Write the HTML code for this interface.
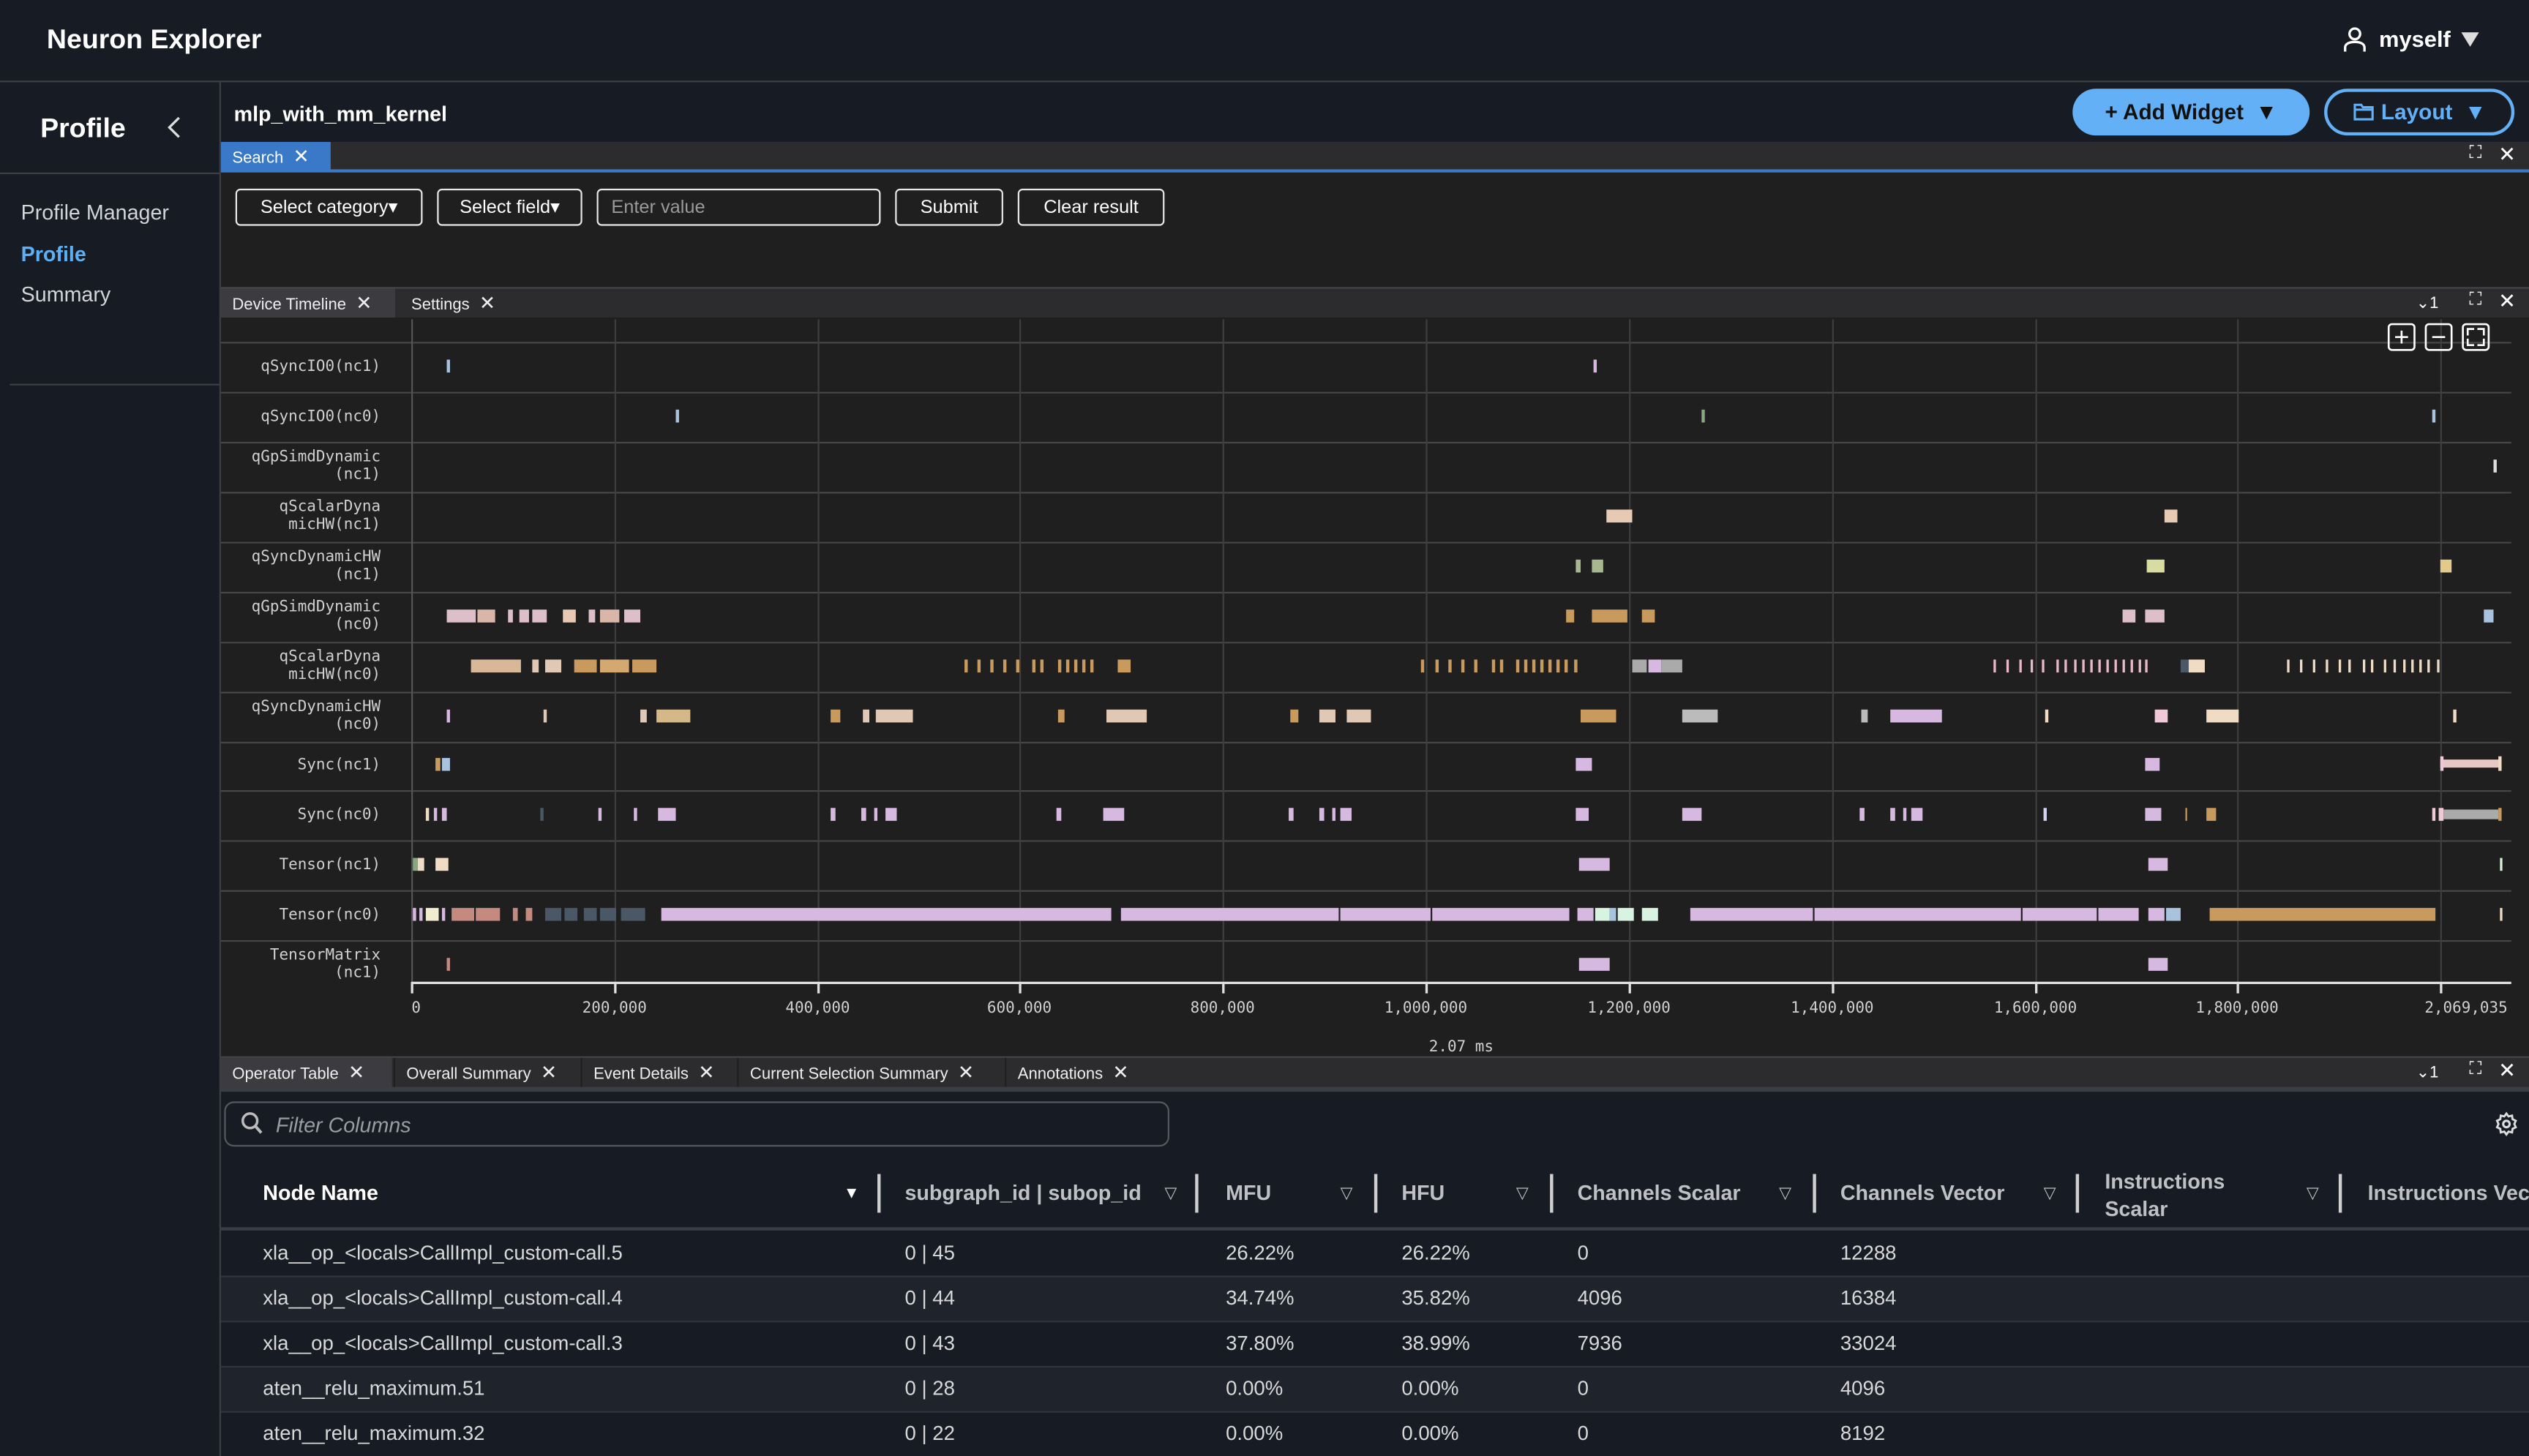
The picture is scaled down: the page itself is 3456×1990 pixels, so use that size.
<!DOCTYPE html>
<html><head><meta charset="utf-8">
<style>
html,body{margin:0;padding:0;background:#171c24;overflow:hidden;}
#w{position:absolute;left:0;top:0;width:1568px;height:903px;transform:scale(2.20408);transform-origin:0 0;font-family:"Liberation Sans",sans-serif;color:#e6e6e6;background:#171c24;overflow:hidden;}
.a{position:absolute;}
.tabbar{position:absolute;background:#2c2c2e;}
.tab{position:absolute;top:0;height:100%;font-size:10px;line-height:18px;padding-left:7px;color:#eee;box-sizing:border-box;}
.x{display:inline-block;margin-left:6px;font-size:12px;}
.btn{position:absolute;border:1px solid #e8e8e8;border-radius:3px;font-size:11.5px;color:#fff;line-height:23px;text-align:center;box-sizing:border-box;height:23px;background:#1f1f1f;}
.lbl{position:absolute;right:1332px;font-family:"DejaVu Sans Mono","Liberation Mono",monospace;font-size:9.5px;color:#d0d0d0;text-align:right;line-height:11px;white-space:nowrap;}
.hd{position:absolute;top:732px;font-size:13px;font-weight:bold;color:#bfc0c4;}
.cell{position:absolute;font-size:12.5px;color:#d8d8d8;margin-top:1px;}
.sep{position:absolute;top:728px;width:2px;height:24px;background:#cfcfcf;}
.tri{position:absolute;top:735px;font-size:10px;color:#bbb;}
</style></head><body><div id="w">
<div class="a" style="left:29px;top:15px;font-size:17px;font-weight:bold;color:#fff">Neuron Explorer</div>
<svg class="a" style="left:1452px;top:16px" width="16" height="17" viewBox="0 0 16 17"><circle cx="8" cy="5" r="3.3" fill="none" stroke="#fff" stroke-width="1.5"/><path d="M2 16v-2.5c0-2 2-3.5 6-3.5s6 1.5 6 3.5V16" fill="none" stroke="#fff" stroke-width="1.5"/></svg>
<div class="a" style="left:1475px;top:16px;font-size:14px;font-weight:bold;color:#fff">myself</div>
<svg class="a" style="left:1526px;top:20px" width="11" height="10"><path d="M0 0h11L5.5 9z" fill="#ddd"/></svg>
<div class="a" style="left:0;top:50px;width:1568px;height:1px;background:#3c3f44"></div>
<div class="a" style="left:136px;top:51px;width:1px;height:852px;background:#3c3f44"></div>
<div class="a" style="left:25px;top:70px;font-size:17px;font-weight:bold;color:#fff">Profile</div>
<svg class="a" style="left:103px;top:72px" width="10" height="14"><path d="M8 1L2 7l6 6" fill="none" stroke="#ddd" stroke-width="1.5"/></svg>
<div class="a" style="left:0;top:107px;width:136px;height:1px;background:#3c3f44"></div>
<div class="a" style="left:13px;top:124px;font-size:13px;color:#d4d4d8">Profile Manager</div>
<div class="a" style="left:13px;top:150px;font-size:13px;font-weight:bold;color:#5eb0f5">Profile</div>
<div class="a" style="left:13px;top:175px;font-size:13px;color:#d4d4d8">Summary</div>
<div class="a" style="left:6px;top:238px;width:130px;height:1px;background:#3c3f44"></div>
<div class="a" style="left:145px;top:63px;font-size:13px;font-weight:bold;color:#fff">mlp_with_mm_kernel</div>
<div class="a" style="left:1285px;top:55px;width:147px;height:29px;border-radius:15px;background:#63b0f6;color:#111;font-size:13.5px;font-weight:bold;line-height:29px;text-align:center">+ Add Widget &nbsp;▼</div>
<div class="a" style="left:1441px;top:55px;width:118px;height:29px;border-radius:15px;border:2px solid #63b0f6;box-sizing:border-box;color:#63b0f6;font-size:13.5px;font-weight:bold;line-height:25px;text-align:center"><svg width="14" height="12" style="vertical-align:-1px"><path d="M1 2h4l1 1.5h6v7.5H1z M1 5h11" fill="none" stroke="#63b0f6" stroke-width="1.4"/></svg> Layout &nbsp;▼</div>
<div class="tabbar" style="left:137px;top:88px;width:1431px;height:18px"></div>
<div class="tab" style="left:137px;top:88px;height:18px;width:68px;background:#3a78c8;color:#fff">Search<span class="x">✕</span></div>
<div class="a" style="left:137px;top:105px;width:1431px;height:2px;background:#3a78c8"></div>
<div class="a" style="left:1531px;top:89px;font-size:11px;color:#fff">⛶</div><div class="a" style="left:1549px;top:88px;font-size:13px;color:#fff">✕</div>
<div class="a" style="left:137px;top:107px;width:1431px;height:71px;background:#1f1f1f"></div>
<div class="btn" style="left:146px;top:117px;width:116px">Select category▾</div>
<div class="btn" style="left:271px;top:117px;width:90px">Select field▾</div>
<div class="btn" style="left:370px;top:117px;width:176px;text-align:left;padding-left:8px;color:#9a9a9a">Enter value</div>
<div class="btn" style="left:555px;top:117px;width:67px">Submit</div>
<div class="btn" style="left:631px;top:117px;width:91px">Clear result</div>
<div class="a" style="left:137px;top:178px;width:1431px;height:1px;background:#45464a"></div>
<div class="tabbar" style="left:137px;top:179px;width:1431px;height:18px"></div>
<div class="tab" style="left:137px;top:179px;height:18px;width:108px;background:#3c3c40">Device Timeline<span class="x">✕</span></div>
<div class="tab" style="left:248px;top:179px;height:18px;width:80px">Settings<span class="x">✕</span></div>
<div class="a" style="left:1498px;top:183px;font-size:10px;color:#fff">⌄1</div>
<div class="a" style="left:1531px;top:180px;font-size:11px;color:#fff">⛶</div><div class="a" style="left:1549px;top:179px;font-size:13px;color:#fff">✕</div>
<div class="a" style="left:137px;top:197px;width:1431px;height:458px;background:#1f1f1f"></div>
<svg class="a" style="left:0;top:0" width="1568" height="903">
<g stroke="#474747" stroke-width="1">
<line x1="137" y1="212.5" x2="1557" y2="212.5"/><line x1="137" y1="243.5" x2="1557" y2="243.5"/><line x1="137" y1="274.5" x2="1557" y2="274.5"/><line x1="137" y1="305.5" x2="1557" y2="305.5"/><line x1="137" y1="336.5" x2="1557" y2="336.5"/><line x1="137" y1="367.5" x2="1557" y2="367.5"/><line x1="137" y1="398.5" x2="1557" y2="398.5"/><line x1="137" y1="429.5" x2="1557" y2="429.5"/><line x1="137" y1="460.5" x2="1557" y2="460.5"/><line x1="137" y1="490.5" x2="1557" y2="490.5"/><line x1="137" y1="521.5" x2="1557" y2="521.5"/><line x1="137" y1="552.5" x2="1557" y2="552.5"/><line x1="137" y1="583.5" x2="1557" y2="583.5"/>
</g>
<g stroke="#3e3e3e" stroke-width="1">
<line x1="381.5" y1="198" x2="381.5" y2="609"/><line x1="507.5" y1="198" x2="507.5" y2="609"/><line x1="632.5" y1="198" x2="632.5" y2="609"/><line x1="758.5" y1="198" x2="758.5" y2="609"/><line x1="884.5" y1="198" x2="884.5" y2="609"/><line x1="1010.5" y1="198" x2="1010.5" y2="609"/><line x1="1136.5" y1="198" x2="1136.5" y2="609"/><line x1="1262.5" y1="198" x2="1262.5" y2="609"/><line x1="1387.5" y1="198" x2="1387.5" y2="609"/><line x1="1513.5" y1="198" x2="1513.5" y2="609"/>
</g>
<line x1="255.5" y1="198" x2="255.5" y2="609" stroke="#555"/>
<line x1="255" y1="609.5" x2="1557" y2="609.5" stroke="#e0e0e0" stroke-width="1.5"/>
<g stroke="#e0e0e0" stroke-width="1.5"><line x1="255.5" y1="609" x2="255.5" y2="616"/><line x1="381.5" y1="609" x2="381.5" y2="616"/><line x1="507.5" y1="609" x2="507.5" y2="616"/><line x1="632.5" y1="609" x2="632.5" y2="616"/><line x1="758.5" y1="609" x2="758.5" y2="616"/><line x1="884.5" y1="609" x2="884.5" y2="616"/><line x1="1010.5" y1="609" x2="1010.5" y2="616"/><line x1="1136.5" y1="609" x2="1136.5" y2="616"/><line x1="1262.5" y1="609" x2="1262.5" y2="616"/><line x1="1387.5" y1="609" x2="1387.5" y2="616"/><line x1="1513.5" y1="609" x2="1513.5" y2="616"/></g>
<g font-family="DejaVu Sans Mono,monospace" font-size="9.5" fill="#d0d0d0" text-anchor="middle">
<text x="258" y="628">0</text><text x="381" y="628">200,000</text><text x="507" y="628">400,000</text><text x="632" y="628">600,000</text><text x="758" y="628">800,000</text><text x="884" y="628">1,000,000</text><text x="1010" y="628">1,200,000</text><text x="1136" y="628">1,400,000</text><text x="1262" y="628">1,600,000</text><text x="1387" y="628">1,800,000</text><text x="1529" y="628">2,069,035</text><text x="906" y="652">2.07 ms</text>
</g>
<g fill="none" stroke="#fff" stroke-width="1.2"><rect x="1481" y="201" width="16" height="16" rx="2"/><rect x="1504" y="201" width="16" height="16" rx="2"/><rect x="1527" y="201" width="16" height="16" rx="2"/><path d="M1485 209h8M1489 205v8M1508 209h8M1530 208v-4h4M1540 208v-4h-4M1530 210v4h4M1540 210v4h-4"/></g>
<g fill="#a9c3df"><rect x="277" y="223" width="2" height="8"/><rect x="988" y="223" width="2" height="8" fill="#d6b8e0"/><rect x="419" y="254" width="2" height="8"/><rect x="1055" y="254" width="2" height="8" fill="#8aa880"/><rect x="1508" y="254" width="2" height="8"/><rect x="1546" y="285" width="2" height="8" fill="#ddd"/></g>
<g fill="#e8c9b4"><rect x="996" y="316" width="16" height="8"/><rect x="1342" y="316" width="8" height="8"/></g>
<g fill="#a7b890"><rect x="977" y="347" width="3" height="8"/><rect x="987" y="347" width="7" height="8"/><rect x="1331" y="347" width="11" height="8" fill="#d8dca0"/><rect x="1513" y="347" width="7" height="8" fill="#e3c98a"/></g>
<g fill="#dcbfc8"><rect x="277" y="378" width="18" height="8"/><rect x="296" y="378" width="11" height="8" fill="#d9b6a8"/><rect x="315" y="378" width="3" height="8"/><rect x="322" y="378" width="6" height="8"/><rect x="330" y="378" width="9" height="8"/><rect x="349" y="378" width="8" height="8" fill="#e8c9b4"/><rect x="365" y="378" width="4" height="8"/><rect x="372" y="378" width="12" height="8" fill="#d9b6a8"/><rect x="387" y="378" width="10" height="8"/><rect x="971" y="378" width="5" height="8" fill="#c99a5e"/><rect x="987" y="378" width="22" height="8" fill="#c99a5e"/><rect x="1018" y="378" width="8" height="8" fill="#c99a5e"/><rect x="1316" y="378" width="8" height="8"/><rect x="1330" y="378" width="12" height="8"/><rect x="1540" y="378" width="6" height="8" fill="#a9c3df"/></g>
<g fill="#c99a5e"><rect x="292" y="409" width="31" height="8" fill="#d9b89a"/><rect x="330" y="409" width="4" height="8" fill="#e0c8b4"/><rect x="338" y="409" width="10" height="8" fill="#e0c8b4"/><rect x="356" y="409" width="14" height="8"/><rect x="372" y="409" width="18" height="8" fill="#d4a870"/><rect x="392" y="409" width="15" height="8"/>
<rect x="598" y="409" width="2" height="8"/><rect x="606" y="409" width="2" height="8"/><rect x="614" y="409" width="2" height="8"/><rect x="622" y="409" width="2" height="8"/><rect x="630" y="409" width="2" height="8"/><rect x="640" y="409" width="2" height="8"/><rect x="645" y="409" width="2" height="8"/><rect x="656" y="409" width="2" height="8"/><rect x="661" y="409" width="2" height="8"/><rect x="666" y="409" width="2" height="8"/><rect x="671" y="409" width="2" height="8"/><rect x="676" y="409" width="2" height="8"/><rect x="693" y="409" width="8" height="8"/>
<rect x="881" y="409" width="2" height="8"/><rect x="890" y="409" width="2" height="8"/><rect x="898" y="409" width="2" height="8"/><rect x="906" y="409" width="2" height="8"/><rect x="914" y="409" width="2" height="8"/><rect x="925" y="409" width="2" height="8"/><rect x="930" y="409" width="2" height="8"/><rect x="940" y="409" width="2" height="8"/><rect x="945" y="409" width="2" height="8"/><rect x="950" y="409" width="2" height="8"/><rect x="955" y="409" width="2" height="8"/><rect x="960" y="409" width="2" height="8"/><rect x="965" y="409" width="2" height="8"/><rect x="970" y="409" width="2" height="8"/><rect x="976" y="409" width="2" height="8"/>
<rect x="1012" y="409" width="9" height="8" fill="#aaa"/><rect x="1022" y="409" width="8" height="8" fill="#d6b8e0"/><rect x="1030" y="409" width="13" height="8" fill="#aaa"/>
<g fill="#e8b8c8"><rect x="1236" y="409" width="1.5" height="8"/><rect x="1244" y="409" width="1.5" height="8"/><rect x="1252" y="409" width="1.5" height="8"/><rect x="1259" y="409" width="1.5" height="8"/><rect x="1266" y="409" width="1.5" height="8"/><rect x="1275" y="409" width="1.5" height="8"/><rect x="1280" y="409" width="1.5" height="8"/><rect x="1286" y="409" width="1.5" height="8"/><rect x="1291" y="409" width="1.5" height="8"/><rect x="1296" y="409" width="1.5" height="8"/><rect x="1301" y="409" width="1.5" height="8"/><rect x="1306" y="409" width="1.5" height="8"/><rect x="1311" y="409" width="1.5" height="8"/><rect x="1316" y="409" width="1.5" height="8"/><rect x="1321" y="409" width="1.5" height="8"/><rect x="1326" y="409" width="1.5" height="8"/><rect x="1330" y="409" width="1.5" height="8"/></g>
<rect x="1352" y="409" width="5" height="8" fill="#4a5766"/><rect x="1357" y="409" width="10" height="8" fill="#f0dcc4"/>
<g fill="#f0dcc4"><rect x="1418" y="409" width="1.5" height="8"/><rect x="1426" y="409" width="1.5" height="8"/><rect x="1434" y="409" width="1.5" height="8"/><rect x="1442" y="409" width="1.5" height="8"/><rect x="1450" y="409" width="1.5" height="8"/><rect x="1456" y="409" width="1.5" height="8"/><rect x="1465" y="409" width="1.5" height="8"/><rect x="1470" y="409" width="1.5" height="8"/><rect x="1478" y="409" width="1.5" height="8"/><rect x="1484" y="409" width="1.5" height="8"/><rect x="1490" y="409" width="1.5" height="8"/><rect x="1495" y="409" width="1.5" height="8"/><rect x="1500" y="409" width="1.5" height="8"/><rect x="1505" y="409" width="1.5" height="8"/><rect x="1511" y="409" width="1.5" height="8"/></g></g>
<g fill="#d6b8e0"><rect x="277" y="440" width="2" height="8"/><rect x="337" y="440" width="2" height="8" fill="#e0c8b4"/><rect x="397" y="440" width="4" height="8" fill="#e0c8b4"/><rect x="407" y="440" width="21" height="8" fill="#d4b888"/><rect x="515" y="440" width="6" height="8" fill="#c99a5e"/><rect x="535" y="440" width="4" height="8" fill="#e0c8b4"/><rect x="543" y="440" width="23" height="8" fill="#e0c8b4"/><rect x="656" y="440" width="4" height="8" fill="#c99a5e"/><rect x="686" y="440" width="25" height="8" fill="#e0c8b4"/><rect x="800" y="440" width="5" height="8" fill="#c99a5e"/><rect x="818" y="440" width="10" height="8" fill="#e0c8b4"/><rect x="835" y="440" width="15" height="8" fill="#e0c8b4"/><rect x="980" y="440" width="22" height="8" fill="#c99a5e"/><rect x="1043" y="440" width="22" height="8" fill="#bbb"/><rect x="1154" y="440" width="4" height="8" fill="#bbb"/><rect x="1172" y="440" width="32" height="8"/><rect x="1268" y="440" width="2" height="8" fill="#f0dcc4"/><rect x="1336" y="440" width="8" height="8" fill="#f0c8d8"/><rect x="1368" y="440" width="20" height="8" fill="#f0dcc4"/><rect x="1521" y="440" width="2" height="8" fill="#f0dcc4"/></g>
<g fill="#d6b8e0"><rect x="270" y="470" width="3" height="8" fill="#c99a5e"/><rect x="274" y="470" width="5" height="8" fill="#a9c3df"/><rect x="977" y="470" width="10" height="8"/><rect x="1330" y="470" width="9" height="8"/><rect x="1513" y="471" width="37" height="5" fill="#e8c8c4"/><rect x="1513" y="469" width="2" height="9" fill="#f0c8d8"/><rect x="1549" y="469" width="2" height="9" fill="#f0dcc4"/></g>
<g fill="#d6b8e0"><rect x="264" y="501" width="2" height="8" fill="#f0dcc4"/><rect x="269" y="501" width="2" height="8"/><rect x="274" y="501" width="3" height="8"/><rect x="335" y="501" width="2" height="8" fill="#4a5766"/><rect x="371" y="501" width="2" height="8"/><rect x="393" y="501" width="2" height="8"/><rect x="408" y="501" width="11" height="8"/><rect x="515" y="501" width="3" height="8"/><rect x="534" y="501" width="3" height="8"/><rect x="542" y="501" width="2" height="8"/><rect x="549" y="501" width="7" height="8"/><rect x="655" y="501" width="3" height="8"/><rect x="684" y="501" width="13" height="8"/><rect x="799" y="501" width="3" height="8"/><rect x="818" y="501" width="3" height="8"/><rect x="826" y="501" width="2" height="8"/><rect x="831" y="501" width="7" height="8"/><rect x="977" y="501" width="8" height="8"/><rect x="1043" y="501" width="12" height="8"/><rect x="1153" y="501" width="3" height="8"/><rect x="1172" y="501" width="3" height="8"/><rect x="1180" y="501" width="2" height="8"/><rect x="1185" y="501" width="7" height="8"/><rect x="1267" y="501" width="2" height="8" fill="#d0d4f0"/><rect x="1330" y="501" width="10" height="8"/><rect x="1355" y="501" width="1" height="8" fill="#c99a5e"/><rect x="1368" y="501" width="6" height="8" fill="#c99a5e"/><rect x="1508" y="501" width="2" height="8" fill="#f0c8d8"/><rect x="1512" y="501" width="3" height="8" fill="#f0c8d8"/><rect x="1515" y="502" width="34" height="6" fill="#aaa"/><rect x="1549" y="501" width="2" height="8" fill="#c99a5e"/></g>
<g fill="#d6b8e0"><rect x="256" y="532" width="3" height="8" fill="#8aa880"/><rect x="259" y="532" width="4" height="8" fill="#f0dcc4"/><rect x="270" y="532" width="8" height="8" fill="#f0dcc4"/><rect x="979" y="532" width="19" height="8"/><rect x="1332" y="532" width="12" height="8"/><rect x="1550" y="532" width="1.5" height="8" fill="#d8f0d8"/></g>
<g fill="#d6b8e0"><rect x="256" y="563" width="2" height="8"/><rect x="260" y="563" width="2" height="8"/><rect x="264" y="563" width="8" height="8" fill="#f0ecd0"/><rect x="274" y="563" width="2" height="8"/><rect x="280" y="563" width="14" height="8" fill="#c48a80"/><rect x="295" y="563" width="15" height="8" fill="#c48a80"/><rect x="318" y="563" width="3" height="8" fill="#c48a80"/><rect x="326" y="563" width="4" height="8" fill="#c48a80"/><rect x="338" y="563" width="10" height="8" fill="#4a5766"/><rect x="350" y="563" width="8" height="8" fill="#4a5766"/><rect x="362" y="563" width="8" height="8" fill="#4a5766"/><rect x="372" y="563" width="10" height="8" fill="#4a5766"/><rect x="385" y="563" width="15" height="8" fill="#4a5766"/><rect x="410" y="563" width="279" height="8"/><rect x="695" y="563" width="135" height="8"/><rect x="831" y="563" width="56" height="8"/><rect x="888" y="563" width="85" height="8"/><rect x="978" y="563" width="10" height="8"/><rect x="989" y="563" width="9" height="8" fill="#d8f4e0"/><rect x="998" y="563" width="4" height="8" fill="#a9c3df"/><rect x="1003" y="563" width="10" height="8" fill="#d8f4e0"/><rect x="1018" y="563" width="10" height="8" fill="#d8f4e0"/><rect x="1048" y="563" width="76" height="8"/><rect x="1125" y="563" width="128" height="8"/><rect x="1254" y="563" width="46" height="8"/><rect x="1301" y="563" width="25" height="8"/><rect x="1332" y="563" width="10" height="8"/><rect x="1343" y="563" width="9" height="8" fill="#a9c3df"/><rect x="1370" y="563" width="140" height="8" fill="#c99a5e"/><rect x="1550" y="563" width="1.5" height="8" fill="#f0dcc4"/></g>
<g fill="#d6b8e0"><rect x="277" y="594" width="2" height="8" fill="#c48a80"/><rect x="979" y="594" width="19" height="8"/><rect x="1332" y="594" width="12" height="8"/></g>
</svg>
<div class="lbl" style="top:222px">qSyncIO0(nc1)</div>
<div class="lbl" style="top:253px">qSyncIO0(nc0)</div>
<div class="lbl" style="top:278px">qGpSimdDynamic<br>(nc1)</div>
<div class="lbl" style="top:309px">qScalarDyna<br>micHW(nc1)</div>
<div class="lbl" style="top:340px">qSyncDynamicHW<br>(nc1)</div>
<div class="lbl" style="top:371px">qGpSimdDynamic<br>(nc0)</div>
<div class="lbl" style="top:402px">qScalarDyna<br>micHW(nc0)</div>
<div class="lbl" style="top:433px">qSyncDynamicHW<br>(nc0)</div>
<div class="lbl" style="top:469px">Sync(nc1)</div>
<div class="lbl" style="top:500px">Sync(nc0)</div>
<div class="lbl" style="top:531px">Tensor(nc1)</div>
<div class="lbl" style="top:562px">Tensor(nc0)</div>
<div class="lbl" style="top:587px">TensorMatrix<br>(nc1)</div>
<div class="a" style="left:137px;top:655px;width:1431px;height:1px;background:#45464a"></div>
<div class="tabbar" style="left:137px;top:656px;width:1431px;height:18px"></div>
<div class="tab" style="left:137px;top:656px;height:18px;width:106px;background:#3c3c40">Operator Table<span class="x">✕</span></div>
<div class="tab" style="left:244px;top:656px;height:18px;width:116px;border-left:1px solid #1f1f1f">Overall Summary<span class="x">✕</span></div>
<div class="tab" style="left:360px;top:656px;height:18px;width:97px;border-left:1px solid #1f1f1f">Event Details<span class="x">✕</span></div>
<div class="tab" style="left:457px;top:656px;height:18px;width:166px;border-left:1px solid #1f1f1f">Current Selection Summary<span class="x">✕</span></div>
<div class="tab" style="left:623px;top:656px;height:18px;width:90px;border-left:1px solid #1f1f1f">Annotations<span class="x">✕</span></div>
<div class="a" style="left:1498px;top:660px;font-size:10px;color:#fff">⌄1</div>
<div class="a" style="left:1531px;top:657px;font-size:11px;color:#fff">⛶</div><div class="a" style="left:1549px;top:656px;font-size:13px;color:#fff">✕</div>
<div class="a" style="left:137px;top:674px;width:1431px;height:3px;background:#3a3d44"></div>
<div class="a" style="left:139px;top:683px;width:586px;height:28px;border:1px solid #55585e;border-radius:6px;box-sizing:border-box"></div>
<svg class="a" style="left:149px;top:689px" width="14" height="15"><circle cx="6" cy="6" r="4.5" fill="none" stroke="#bbb" stroke-width="1.6"/><path d="M9.5 9.5L13 13.5" stroke="#bbb" stroke-width="1.8"/></svg>
<div class="a" style="left:171px;top:690px;font-size:13px;font-style:italic;color:#9a9ca2">Filter Columns</div>
<svg class="a" style="left:1546px;top:689px" width="16" height="16" viewBox="0 0 16 16"><circle cx="8" cy="8" r="2" fill="none" stroke="#ddd" stroke-width="1.4"/><path d="M8 1.5l1.3 1.8 2.2-.5.3 2.2 2 1-.9 2 .9 2-2 1-.3 2.2-2.2-.5L8 14.5l-1.3-1.8-2.2.5-.3-2.2-2-1 .9-2-.9-2 2-1 .3-2.2 2.2.5z" fill="none" stroke="#ddd" stroke-width="1.3"/></svg>
<div class="hd" style="left:163px;color:#fff">Node Name</div><div class="tri" style="left:523px;color:#fff">▼</div><div class="sep" style="left:544px"></div>
<div class="hd" style="left:561px">subgraph_id | subop_id</div><div class="tri" style="left:722px">▽</div><div class="sep" style="left:741px"></div>
<div class="hd" style="left:760px">MFU</div><div class="tri" style="left:831px">▽</div><div class="sep" style="left:852px"></div>
<div class="hd" style="left:869px">HFU</div><div class="tri" style="left:940px">▽</div><div class="sep" style="left:961px"></div>
<div class="hd" style="left:978px">Channels Scalar</div><div class="tri" style="left:1103px">▽</div><div class="sep" style="left:1124px"></div>
<div class="hd" style="left:1141px">Channels Vector</div><div class="tri" style="left:1267px">▽</div><div class="sep" style="left:1287px"></div>
<div class="hd" style="left:1305px;top:724px;line-height:17px">Instructions<br>Scalar</div><div class="tri" style="left:1430px">▽</div><div class="sep" style="left:1450px"></div>
<div class="hd" style="left:1468px;white-space:nowrap">Instructions Vector</div>
<div class="a" style="left:137px;top:761px;width:1431px;height:2px;background:#3a3d44"></div>
<div class="a" style="left:137px;top:791px;width:1431px;height:27px;background:#1e232c;border-top:1px solid #30343c;border-bottom:1px solid #30343c"></div>
<div class="a" style="left:137px;top:847px;width:1431px;height:27px;background:#1e232c;border-top:1px solid #30343c;border-bottom:1px solid #30343c"></div>
<div class="cell" style="left:163px;top:769px">xla__op_&lt;locals&gt;CallImpl_custom-call.5</div><div class="cell" style="left:561px;top:769px">0 | 45</div><div class="cell" style="left:760px;top:769px">26.22%</div><div class="cell" style="left:869px;top:769px">26.22%</div><div class="cell" style="left:978px;top:769px">0</div><div class="cell" style="left:1141px;top:769px">12288</div>
<div class="cell" style="left:163px;top:797px">xla__op_&lt;locals&gt;CallImpl_custom-call.4</div><div class="cell" style="left:561px;top:797px">0 | 44</div><div class="cell" style="left:760px;top:797px">34.74%</div><div class="cell" style="left:869px;top:797px">35.82%</div><div class="cell" style="left:978px;top:797px">4096</div><div class="cell" style="left:1141px;top:797px">16384</div>
<div class="cell" style="left:163px;top:825px">xla__op_&lt;locals&gt;CallImpl_custom-call.3</div><div class="cell" style="left:561px;top:825px">0 | 43</div><div class="cell" style="left:760px;top:825px">37.80%</div><div class="cell" style="left:869px;top:825px">38.99%</div><div class="cell" style="left:978px;top:825px">7936</div><div class="cell" style="left:1141px;top:825px">33024</div>
<div class="cell" style="left:163px;top:853px">aten__relu_maximum.51</div><div class="cell" style="left:561px;top:853px">0 | 28</div><div class="cell" style="left:760px;top:853px">0.00%</div><div class="cell" style="left:869px;top:853px">0.00%</div><div class="cell" style="left:978px;top:853px">0</div><div class="cell" style="left:1141px;top:853px">4096</div>
<div class="cell" style="left:163px;top:881px">aten__relu_maximum.32</div><div class="cell" style="left:561px;top:881px">0 | 22</div><div class="cell" style="left:760px;top:881px">0.00%</div><div class="cell" style="left:869px;top:881px">0.00%</div><div class="cell" style="left:978px;top:881px">0</div><div class="cell" style="left:1141px;top:881px">8192</div>
</div></body></html>
